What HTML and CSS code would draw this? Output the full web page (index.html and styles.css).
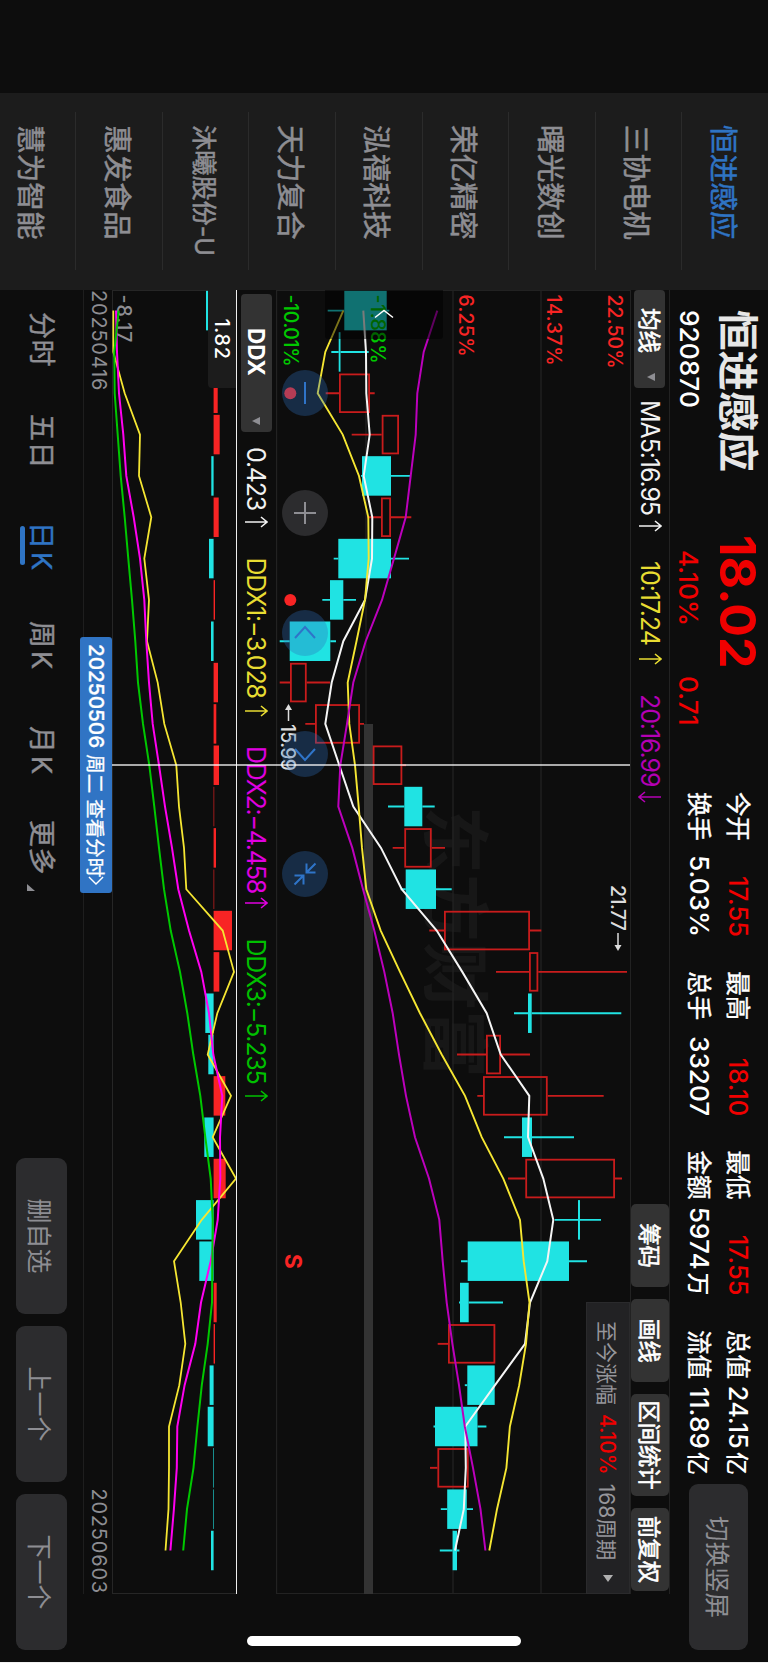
FILE: index.html
```html
<!DOCTYPE html>
<html lang="zh-CN">
<head>
    <meta charset="UTF-8">
    <meta name="viewport" content="width=device-width, initial-scale=1.0">
    <title>恒进感应 920870</title>
    <link rel="stylesheet" href="styles.css">
</head>
<body>
    <!-- landscape screen, turned 90deg clockwise -->
    <div class="screen">
        <nav class="stocks">
            <a class="stock active">恒进感应</a>
            <a class="stock">三协电机</a>
            <a class="stock">曙光数创</a>
            <a class="stock">荣亿精密</a>
            <a class="stock">泓禧科技</a>
            <a class="stock">天力复合</a>
            <a class="stock small">沐曦股份-U</a>
            <a class="stock">惠发食品</a>
            <a class="stock">慧为智能</a>
        </nav>

        <main class="main">
            <header class="header">
                <div class="title">
                    <h1>恒进感应</h1>
                    <span class="code">920870</span>
                </div>
                <div class="price">
                    <strong>18.02</strong>
                    <div class="change"><span>4.10%</span><span>0.71</span></div>
                </div>
                <dl class="quote">
                    <div><dt>今开</dt><dd class="up">17.55</dd></div>
                    <div><dt>最高</dt><dd class="up">18.10</dd></div>
                    <div><dt>最低</dt><dd class="up">17.55</dd></div>
                    <div><dt>总值</dt><dd>24.15<i>亿</i></dd></div>
                    <div class="second"><dt>换手</dt><dd>5.03%</dd></div>
                    <div class="second"><dt>总手</dt><dd>33207</dd></div>
                    <div class="second"><dt>金额</dt><dd>5974<i>万</i></dd></div>
                    <div class="second"><dt>流值</dt><dd>11.89<i>亿</i></dd></div>
                </dl>
                <button type="button" class="btn switch">切换竖屏</button>
            </header>

            <div class="toolbar">
                <button type="button" class="select ma-select">均线<svg class="caret" viewBox="0 0 8 8"><path d="M0 0h8l-4 8z"/></svg></button>
                <div class="ma-values">
                    <span class="white">MA5:16.95<svg class="arrow" viewBox="0 0 12 24"><path d="M6 23V1M1 7l5-6 5 6"/></svg></span>
                    <span class="yellow">10:17.24<svg class="arrow" viewBox="0 0 12 24"><path d="M6 23V1M1 7l5-6 5 6"/></svg></span>
                    <span class="purple">20:16.99<svg class="arrow" viewBox="0 0 12 24"><path d="M6 1v22M1 17l5 6 5-6"/></svg></span>
                </div>
                <div class="tools">
                    <button type="button">筹码</button>
                    <button type="button">画线</button>
                    <button type="button" class="wide">区间统计</button>
                    <button type="button">前复权</button>
                </div>
            </div>

            <section class="charts">
                <div class="k-chart">
                    <svg id="kline" width="1304" height="354" viewBox="0 0 1304 354"></svg>
                    <div class="since">
                        <span>至今涨幅</span><b>4.10%</b><span>168周期</span>
                        <svg class="play" viewBox="0 0 7 10"><path d="M0 0l7 5-7 5z"/></svg>
                    </div>
                    <div class="drawer">
                        <svg viewBox="0 0 10 20"><path d="M8.5 1L1.5 10l7 9"/></svg>
                    </div>
                    <div class="controls">
                        <button type="button"><svg viewBox="-23 -23 46 46"><path d="M-11 0h22"/></svg></button>
                        <button type="button" class="gray"><svg viewBox="-23 -23 46 46"><path d="M-11 0h22M0-11v22"/></svg></button>
                        <button type="button"><svg viewBox="-23 -23 46 46"><path d="M5-10L-6 0 5 10"/></svg></button>
                        <button type="button"><svg viewBox="-23 -23 46 46"><path d="M-5-10L6 0-5 10"/></svg></button>
                        <button type="button"><svg viewBox="-23 -23 46 46"><path d="M-10.5-10.5l9 9M-10.5-1.5h9v-9M10.5 10.5l-9-9M1.5 10.5v-9h9"/></svg></button>
                    </div>
                </div>

                <div class="ddx-bar">
                    <button type="button" class="select ddx-select">DDX<svg class="caret" viewBox="0 0 8 8"><path d="M0 0h8l-4 8z"/></svg></button>
                    <div class="ddx-values">
                        <span class="white">0.423<svg class="arrow" viewBox="0 0 12 24"><path d="M6 23V1M1 7l5-6 5 6"/></svg></span>
                        <span class="yellow">DDX1:−3.028<svg class="arrow" viewBox="0 0 12 24"><path d="M6 23V1M1 7l5-6 5 6"/></svg></span>
                        <span class="magenta">DDX2:−4.458<svg class="arrow" viewBox="0 0 12 24"><path d="M6 23V1M1 7l5-6 5 6"/></svg></span>
                        <span class="green">DDX3:−5.235<svg class="arrow" viewBox="0 0 12 24"><path d="M6 23V1M1 7l5-6 5 6"/></svg></span>
                    </div>
                </div>

                <div class="ddx-chart">
                    <svg id="ddx" width="1304" height="125" viewBox="0 0 1304 125"></svg>
                    <span class="ddx-tag">1.82</span>
                </div>

                <div class="dates">
                    <time datetime="2025-04-16">20250416</time>
                    <time datetime="2025-06-03">20250603</time>
                </div>

                <div class="cross-x"></div>
                <div class="cross-y"></div>
                <div class="date-tip">
                    <b>20250506</b><span>周二</span><span>查看分时</span>
                    <svg viewBox="0 0 10 18"><path d="M1 1l8 8-8 8"/></svg>
                </div>
            </section>

            <footer class="footer">
                <div class="periods">
                    <a>分时</a>
                    <a>五日</a>
                    <a class="k active">日K</a>
                    <a class="k">周K</a>
                    <a class="k">月K</a>
                    <a>更多<svg class="corner" viewBox="0 0 7 8"><path d="M0 8h7V0z"/></svg></a>
                </div>
                <div class="actions">
                    <button type="button" class="btn">删自选</button>
                    <button type="button" class="btn">上一个</button>
                    <button type="button" class="btn">下一个</button>
                </div>
            </footer>
        </main>

        <div class="home-indicator"></div>
    </div>

    <script src="script.js"></script>
</body>
</html>
```

FILE: styles.css
```css
* {
    box-sizing: border-box;
}

html,
body {
    margin: 0;
    width: 768px;
    height: 1663px;
    overflow: hidden;
    background-color: #f2f2f2;
}

body {
    font-family: Inter, "Noto Sans CJK SC", sans-serif;
    color: #fff;
}

button {
    margin: 0;
    padding: 0;
    border: 0;
    font-family: inherit;
    color: inherit;
    white-space: nowrap;
}

svg {
    display: block;
}

.screen {
    display: flex;
    width: 1662px;
    height: 768px;
    padding-left: 93px;
    background-color: #0d0d0d;
    overflow: hidden;
    transform-origin: 0 0;
    transform: translateX(768px) rotate(90deg);
}

/* watch list */
.stocks {
    flex: none;
    width: 197px;
    height: 768px;
    padding: 0 20px 0 19px;
    background-color: #1c1c1c;
}

.stock {
    display: flex;
    align-items: center;
    height: 86.6px;
    padding-left: 13px;
    border-bottom: 1px solid #2b2b2b;
    font-size: 28.7px;
    -webkit-text-stroke: 0.5px;
    color: #8e8e93;
    white-space: nowrap;
}

.stock:last-child {
    height: 75px;
    padding-top: 11px;
    border-bottom: 0;
}

.stock.small {
    font-size: 25.2px;
}

.stock.active {
    color: #2f74c4;
}

.main {
    flex: none;
    width: 1304px;
}

/* header */
.header {
    display: flex;
    height: 98px;
    width: 1372px;
    padding-left: 20px;
    line-height: 1;
}

.title {
    width: 225px;
}

.title h1 {
    margin: 11px 0 0;
    font-size: 40.5px;
    line-height: 40px;
    font-weight: 700;
    color: #e6e6e6;
}

.code {
    display: block;
    margin-top: 15px;
    font-size: 26.3px;
    font-weight: 500;
}

.price {
    width: 257px;
    color: #f00000;
}

.price strong {
    display: block;
    margin-top: 5px;
    font-size: 50px;
    font-weight: 700;
}

.change {
    display: flex;
    gap: 50px;
    margin-top: 12px;
    padding-left: 15px;
    font-size: 26.3px;
    font-weight: 500;
}

.quote {
    display: grid;
    grid-template-columns: repeat(4, 145px);
    column-gap: 34.3px;
    grid-auto-rows: 39.5px;
    margin: 10px 0 0;
    width: 692px;
}

.quote div {
    display: flex;
    justify-content: space-between;
    align-items: center;
}

.quote dt {
    font-size: 24.5px;
    -webkit-text-stroke: 0.4px;
}

.quote dd {
    margin: 0;
    font-size: 25.5px;
    font-weight: 500;
    white-space: nowrap;
}

.quote .second dd {
    font-size: 26.2px;
}

.quote i {
    margin-left: 3px;
    font-size: 23px;
    font-style: normal;
}

.quote .up {
    color: #f00000;
}

.btn {
    height: 51px;
    width: 156px;
    border-radius: 9px;
    background-color: #2c2c2e;
    font-size: 25px;
    color: #8e8e93;
}

.switch {
    width: 166px;
    height: 59px;
    margin-top: 20px;
    padding-bottom: 2px;
    font-size: 25.5px;
}

/* toolbar with MA values */
.toolbar {
    display: flex;
    align-items: center;
    height: 40px;
    padding-right: 3px;
    border-top: 1px solid #222;
    border-bottom: 1px solid #222;
}

.select {
    display: flex;
    flex: none;
    align-items: center;
    height: 31px;
    border-radius: 4px;
    background-color: #333;
    font-size: 22.5px;
}

.ma-select {
    width: 98px;
    padding: 0 0 2px 18px;
    -webkit-text-stroke: 0.6px;
}

.caret {
    width: 8px;
    height: 8px;
    margin-left: 20px;
    fill: #8e8e93;
    stroke: none;
}

.ma-values,
.ddx-values {
    display: grid;
    font-size: 25px;
    letter-spacing: -1.1px;
    white-space: nowrap;
}

.ma-values span,
.ddx-values span {
    display: flex;
    align-items: center;
    justify-content: space-between;
}

.ma-values {
    flex: 1;
    grid-template-columns: 132px 104px 109px;
    column-gap: 29px;
    margin-left: 12px;
}

.arrow {
    width: 12px;
    height: 24px;
    fill: none;
    stroke: currentColor;
    stroke-width: 1.6;
}

.white { color: #f2f2f2; }
.yellow { color: #e8dc32; }
.purple { color: #b400b4; }
.magenta { color: #e000e0; }
.green { color: #00c000; }

.tools {
    display: flex;
    flex: none;
    gap: 12px;
}

.tools button {
    width: 83px;
    height: 38px;
    padding-bottom: 2px;
    border-radius: 5px;
    background-color: #333;
    font-size: 22.3px;
    -webkit-text-stroke: 0.6px;
}

.tools .wide {
    width: 102px;
}

/* charts */
.charts {
    position: relative;
    height: 547px;
}

.k-chart {
    position: relative;
    height: 354px;
}

.watermark {
    font-size: 68px;
    font-weight: 700;
    fill: #171717;
}

.axis {
    font-size: 19.5px;
    font-weight: 500;
}

.since {
    position: absolute;
    top: 0;
    right: 0;
    display: flex;
    align-items: center;
    width: 292px;
    height: 44px;
    padding-left: 18px;
    background-color: #222224;
    border: 1px solid #2a2a2c;
    font-size: 21px;
    color: #96969b;
    white-space: nowrap;
}

.since b {
    margin: 0 9px;
    font-weight: 500;
    color: #f00000;
}

.play {
    width: 7px;
    height: 10px;
    margin-left: 15px;
    fill: #b0b0b0;
}

.drawer {
    position: absolute;
    left: 0;
    top: 187px;
    display: flex;
    align-items: center;
    width: 49px;
    height: 118px;
    padding-left: 19px;
    border-radius: 0 3px 3px 0;
    background-color: rgba(0, 0, 0, 0.5);
}

.drawer svg {
    width: 10px;
    height: 20px;
    fill: none;
    stroke: #fff;
    stroke-width: 1.5;
}

.controls {
    position: absolute;
    left: 80px;
    top: 302px;
    display: flex;
    gap: 74.2px;
}

.controls button {
    width: 46px;
    height: 46px;
    border-radius: 50%;
    background-color: rgba(46, 108, 185, 0.33);
}

.controls .gray {
    background-color: #2c2c2e;
}

.controls path {
    fill: none;
    stroke: #2f74c8;
    stroke-width: 2;
}

.controls .gray path {
    stroke: #8e8e93;
}

.ddx-bar {
    display: flex;
    align-items: center;
    height: 39px;
    padding-left: 4px;
}

.ddx-select {
    width: 138px;
    padding-left: 34px;
    font-weight: 700;
}

.ddx-select .caret {
    margin-left: auto;
    margin-right: 7px;
}

.ddx-values {
    grid-template-columns: 81px 159px 163px 163px;
    column-gap: 29.5px;
    margin-left: 15px;
    letter-spacing: -1.25px;
}

.ddx-chart {
    position: relative;
    height: 125px;
}

.ddx-tag {
    position: absolute;
    left: 0;
    top: 1px;
    width: 98px;
    height: 28px;
    border-radius: 0 0 4px 0;
    background-color: #1c1c1c;
    font-size: 20px;
    font-weight: 500;
    line-height: 28px;
    text-align: center;
    letter-spacing: 0.6px;
}

.dates {
    display: flex;
    justify-content: space-between;
    height: 29px;
    border-bottom: 1px solid #1e1e1e;
    font-size: 20px;
    line-height: 27px;
    letter-spacing: 0.8px;
    color: #8e8e93;
}

.cross-x,
.cross-y {
    position: absolute;
    background-color: rgba(255, 255, 255, 0.65);
}

.cross-x {
    left: 0;
    top: 393px;
    width: 1304px;
    height: 1px;
    background-color: #eee;
}

.cross-y {
    left: 474px;
    top: 0;
    width: 2px;
    height: 518px;
}

.date-tip {
    position: absolute;
    left: 347px;
    top: 518px;
    display: flex;
    align-items: center;
    width: 256px;
    height: 32px;
    padding: 0 8px 1px 7px;
    border-radius: 3px;
    background-color: #3074c4;
    font-size: 19.5px;
    -webkit-text-stroke: 0.3px;
    white-space: nowrap;
}

.date-tip b {
    font-weight: 500;
    font-size: 20.7px;
}

.date-tip span {
    margin-left: 6px;
}

.date-tip svg {
    width: 10px;
    height: 18px;
    margin-left: -1px;
    fill: none;
    stroke: #fff;
    stroke-width: 1.6;
}

/* footer */
.footer {
    display: flex;
    justify-content: space-between;
    width: 1360px;
    height: 83px;
    padding: 16px 0 0 22px;
}

.periods {
    display: grid;
    grid-template-columns: 102px 108px 99px 105px 94px 60px;
    font-size: 27px;
    line-height: 52px;
    color: #8e8e93;
    -webkit-text-stroke: 0.4px;
}

.periods a {
    position: relative;
    height: 51px;
    letter-spacing: 0.5px;
    white-space: nowrap;
}

.periods .k {
    letter-spacing: 3px;
}

.periods .active {
    color: #2f74c4;
}

.periods .active::after {
    content: "";
    position: absolute;
    left: 4px;
    bottom: 4px;
    width: 39px;
    height: 5px;
    border-radius: 3px;
    background-color: #2f74c4;
}

.corner {
    position: absolute;
    left: 64px;
    bottom: 11px;
    width: 7px;
    height: 8px;
    fill: #8e8e93;
    stroke: none;
}

.actions {
    display: flex;
    gap: 12px;
}

.home-indicator {
    position: absolute;
    right: 16px;
    top: 247px;
    width: 10px;
    height: 274px;
    border-radius: 5px;
    background-color: #fff;
}
```

FILE: script.js
```js
const NS = 'http://www.w3.org/2000/svg';
const CYAN = '#20e3e3',
    RED = '#f82424',
    DARK_RED = '#c81c1c';

// horizontal position of every day
const first = 20.6,
    step = 41.33,
    barWidth = 39.5;
const cx = i => first + i * step;

function draw(svg, name, attrs, text) {
    const el = document.createElementNS(NS, name);
    for (const key in attrs) el.setAttribute(key, attrs[key]);
    if (text) el.textContent = text;
    svg.appendChild(el);
    return el;
}

function line(svg, values, top, color, width) {
    const points = values.map((v, i) => `${cx(i)},${top - v}`).join(' ');
    draw(svg, 'polyline', { points, fill: 'none', stroke: color, 'stroke-width': width });
}

// [low, body bottom, body top, high, up]
const candles = [
    [327.7, 344.3, 386.7, 389.3, 0], [331.3, 338.7, 340.5, 368.7, 0], [325.7, 339, 370, 374.7, 1],
    [351.7, 381.7, 399, 399, 1], [361, 362, 391, 410, 0], [367.3, 381, 391, 411.3, 1],
    [333.7, 338.3, 391, 409, 0], [322.3, 330, 343.3, 356, 0], [279.7, 289.7, 330.3, 336, 0],
    [279.7, 290, 306.7, 330, 1], [305.3, 315, 360, 364, 1], [372.7, 372.7, 402.3, 406, 1],
    [388, 404.3, 422.3, 434.7, 0], [392.7, 404.3, 431.7, 445, 1], [400.7, 405.7, 436, 451.7, 0],
    [429.3, 444, 530, 541.3, 1], [496, 529, 538.3, 627, 1], [514, 528, 531.7, 621.3, 0],
    [457, 486, 501, 530, 1], [477.3, 483, 547.7, 603.7, 1], [504, 522, 532, 574, 0],
    [508, 525.3, 615, 622, 1], [554.7, 578, 580, 601, 0], [461, 467.7, 569, 587, 0],
    [459, 460, 468.7, 503, 0], [437.7, 448, 495.3, 495.3, 1], [464.8, 467.3, 494.7, 494.7, 0],
    [433.5, 435, 477.5, 486.4, 0], [430, 437.4, 468.7, 468.7, 1], [440.8, 447.2, 466.8, 473, 0],
    [439.8, 452.6, 457, 459.4, 0]
];

const ma5 = [363.3, 366, 366.3, 369.7, 363.7, 372.3, 372, 365, 343.3, 331.7, 325.3, 339.3, 353.3, 381, 401.7, 436.7, 462.3, 486.7, 500.7, 529.3, 528, 543.3, 553.3, 547.3, 530, 525, 495, 465.3, 465.8, 463.8, 455];
const ma10 = [343.3, 325.3, 317.7, 342.7, 359, 368.3, 368.7, 365, 356.5, 347.7, 349.3, 355, 358.7, 362, 366.3, 380.7, 400, 420, 441.7, 465, 481.7, 503.3, 520, 523.7, 529.5, 526, 519.2, 509.9, 506.4, 497, 489.3];
const ma20 = [437.3, 423.7, 417.3, 415.7, 410.7, 405.7, 394, 382, 365.7, 353.3, 347, 340.3, 338.3, 352.3, 363, 374.3, 384.3, 392.7, 399, 406, 415, 429, 439.3, 442.7, 446.7, 452.4, 459, 464.8, 473, 480.5, 485.4];

const bars = [206, 213, 217.7, 219.7, 211.3, 218.7, 209, 215, 211, 218, 216.3, 219, 214.2, 216, 214.2, 232, 219.3, 205.3, 208.3, 225.3, 204.3, 225.7, 196, 199.3, 216.7, 215, 209.6, 207.7, 213, 213, 211];
const ddx1 = [113.3, 113.3, 124.7, 140, 139, 151.3, 144.3, 149, 147, 157.7, 164.3, 176.3, 179, 184, 186.3, 222.7, 234, 217.3, 207.7, 231, 212.7, 236, 201.7, 174, 180.7, 185.3, 179.3, 169, 169, 168.5, 165.5];
const ddx2 = [116, 117, 119, 123.3, 126.3, 133.7, 140, 144.3, 146.3, 149, 152.7, 159, 165, 172, 178.3, 189, 201.3, 209, 213.3, 222.3, 220, 220.3, 217.7, 210.7, 201, 195.3, 184.6, 177.3, 176.8, 173.9, 170.4];
const ddx3 = [118.7, 114.3, 114.7, 117.7, 120.7, 124.7, 128.3, 132, 135.3, 138, 143, 149.3, 154.3, 159, 164, 170.7, 180, 187.3, 193.3, 200.3, 205.3, 210.7, 212.7, 212.3, 212, 207.7, 201.8, 197.4, 193.5, 187, 183.2];

function drawKline() {
    const svg = document.querySelector('#kline'),
        top = 630;

    draw(svg, 'text', { x: 516, y: 200, class: 'watermark', textLength: 272 }, '东方财富');
    [89, 177, 264, 353.5].forEach(y => {
        draw(svg, 'path', { d: `M0 ${y}H1304`, stroke: '#222', 'stroke-width': 1.4 });
    });
    draw(svg, 'path', { d: 'M.5 0V354M1303.5 0V354', stroke: '#222' });
    draw(svg, 'rect', { x: 434, y: 257, width: 870, height: 9, fill: '#333' });

    candles.forEach(([low, bottom, head, high, up], i) => {
        const color = up ? DARK_RED : CYAN,
            x = cx(i);
        draw(svg, 'path', {
            d: `M${x} ${top - high}V${top - head}M${x} ${top - bottom}V${top - low}`,
            stroke: color, 'stroke-width': 1.9
        });
        const inset = up ? 0.9 : 0;
        draw(svg, 'rect', {
            x: x - barWidth / 2 + inset,
            y: top - head + inset,
            width: barWidth - inset * 2,
            height: head - bottom - inset * 2,
            fill: up ? 'none' : CYAN,
            stroke: up ? DARK_RED : 'none',
            'stroke-width': 1.8
        });
    });

    // percent scale stays above the candles
    [
        ['22.50%', 22, RED, 74], ['14.37%', 83, RED, 71], ['6.25%', 171.5, RED, 62],
        ['-1.88%', 259, '#00c800', 69], ['-10.01%', 346.5, '#00c800', 72]
    ].forEach(([text, y, fill, textLength]) => {
        draw(svg, 'text', { x: 4.5, y, fill, textLength, class: 'axis' }, text);
    });

    line(svg, ma5, top, '#f5f5f5', 2);
    line(svg, ma10, top, '#f5e632', 1.9);
    line(svg, ma20, top, '#bc00bc', 2);

    // highest and lowest price
    draw(svg, 'text', { x: 595, y: 19.5, fill: '#ddd', textLength: 46, class: 'axis' }, '21.77');
    draw(svg, 'path', { d: 'M643 12h13', stroke: '#ddd', 'stroke-width': 1.5 });
    draw(svg, 'path', { d: 'M661 12l-6-3.5v7z', fill: '#ddd' });
    draw(svg, 'text', { x: 434, y: 349.5, fill: '#ddd', textLength: 47, class: 'axis' }, '15.99');
    draw(svg, 'path', { d: 'M431 341.5h-13', stroke: '#ddd', 'stroke-width': 1.5 });
    draw(svg, 'path', { d: 'M414 341.5l6-3.5v7z', fill: '#ddd' });

    draw(svg, 'circle', { cx: cx(2), cy: 339.7, r: 6, fill: RED });
    draw(svg, 'circle', { cx: cx(7), cy: 339.7, r: 6, fill: RED });
    draw(svg, 'text', {
        x: cx(23), y: 345.5, fill: RED, 'font-size': 23, 'font-weight': 700, 'text-anchor': 'middle'
    }, 'S');
}

function drawDdx() {
    const svg = document.querySelector('#ddx'),
        top = 237,
        zero = 213.6;

    draw(svg, 'path', { d: 'M0 124.5H1304M.5 0V125M1303.5 0V125', stroke: '#262626', fill: 'none' });
    draw(svg, 'text', { x: 4.5, y: 120, fill: '#8e8e93', textLength: 48, class: 'axis' }, '-8.17');

    bars.forEach((v, i) => {
        draw(svg, 'rect', {
            x: cx(i) - barWidth / 2,
            y: top - Math.max(v, zero),
            width: barWidth,
            height: Math.abs(v - zero),
            fill: v > zero ? RED : CYAN
        });
    });

    line(svg, ddx1, top, '#f5e632', 1.8);
    line(svg, ddx2, top, '#ff00f0', 2);
    line(svg, ddx3, top, '#00c800', 2);
}

drawKline();
drawDdx();
```
